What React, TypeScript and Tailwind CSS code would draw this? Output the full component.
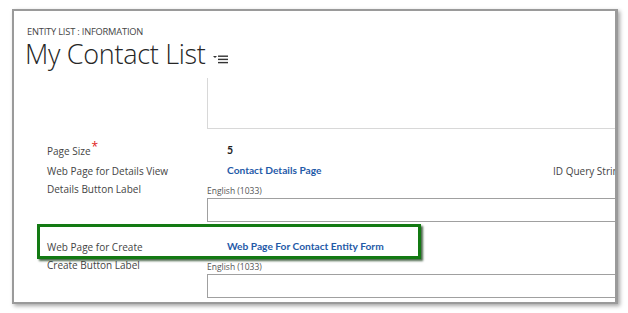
import React, { FC } from "react";

const font = { fontFamily: "'Open Sans', 'Noto Sans', sans-serif" };
const boldFont = { fontFamily: "Lato, 'Open Sans', sans-serif" };

const FilterIcon: FC = () => (
  <svg width="16" height="10" viewBox="0 0 16 10" className="ml-[7px] mt-[17px] shrink-0">
    <path d="M0 1h4L2 3z" fill="#333" />
    <rect x="5" y="0.5" width="10" height="1.4" fill="#333" />
    <rect x="5" y="3.7" width="10" height="1.4" fill="#333" />
    <rect x="5" y="6.9" width="10" height="1.4" fill="#333" />
  </svg>
);

const Label: FC<{ children: React.ReactNode }> = ({ children }) => (
  <div className="w-[180px] shrink-0 text-[10px] text-[#444]">{children}</div>
);

const App: FC = () => {
  return (
    <div className="w-[628px] h-[313px] bg-white overflow-hidden pt-[9px] pl-[12px]" style={font}>
      <div className="relative w-[606px] h-[295px] bg-white border-t-2 border-l-2 border-r-[3px] border-b-[2px] border-[#9a9a9a] shadow-[2px_2px_4px_rgba(0,0,0,0.35)] overflow-hidden">
        {/* header */}
        <div className="pl-[13px] pt-[16px] h-[10px] box-content text-[9.3px] leading-[10px] text-[#444] tracking-[-0.2px]">
          ENTITY LIST : INFORMATION
        </div>
        <div className="flex items-start pl-[11px] h-[32px] mt-[1px]">
          <div className="text-[27px] leading-[32px] font-light text-[#262626] tracking-[-0.3px]">
            My Contact List
          </div>
          <FilterIcon />
        </div>

        {/* top box, continues from above */}
        <div className="ml-[193px] mt-[8px] h-[51px] border-l border-b border-[#d8d8d8]" />

        {/* form rows */}
        <div className="pl-[33px] pt-[12px]">
          <div className="flex items-center h-[20px]">
            <Label>
              Page Size<span className="text-[#e02020] text-[12px] relative top-[-4px] ml-[1px]">*</span>
            </Label>
            <div className="text-[10.5px] font-bold text-[#222]" style={boldFont}>5</div>
          </div>
          <div className="flex items-center h-[20px]">
            <Label>Web Page for Details View</Label>
            <div className="w-[326px] shrink-0 text-[10.2px] font-bold text-[#1f5aa8]" style={boldFont}>
              Contact Details Page
            </div>
            <div className="text-[10px] text-[#444] whitespace-nowrap">ID Query String</div>
          </div>
          <div className="flex h-[45px]">
            <Label>
              <div className="leading-[16px]">Details Button Label</div>
            </Label>
            <div className="flex-1 -ml-[20px]">
              <div className="text-[8.5px] leading-[14px] mt-[3px] text-[#555]">English (1033)</div>
              <div className="h-[24px] border border-r-0 border-[#a0a0a0]" />
            </div>
          </div>
          <div className="flex items-center h-[34px] pt-[8px]">
            <Label>Web Page for Create</Label>
            <div className="text-[10.2px] font-bold text-[#1f5aa8]" style={boldFont}>
              Web Page For Contact Entity Form
            </div>
          </div>
          <div className="flex h-[50px]">
            <Label>
              <div className="leading-[12px] -mt-[1px]">Create Button Label</div>
            </Label>
            <div className="flex-1 -ml-[20px]">
              <div className="text-[8.5px] leading-[14px] text-[#555]">English (1033)</div>
              <div className="h-[24px] border border-r-0 border-[#a0a0a0]" />
            </div>
          </div>
        </div>

        {/* highlight annotation */}
        <div className="absolute left-[23px] top-[213px] w-[384px] h-[35px] border-[3px] border-[#137a13] shadow-[2px_2px_2px_rgba(0,40,0,0.7)]" />
      </div>
    </div>
  );
};

export default App;
